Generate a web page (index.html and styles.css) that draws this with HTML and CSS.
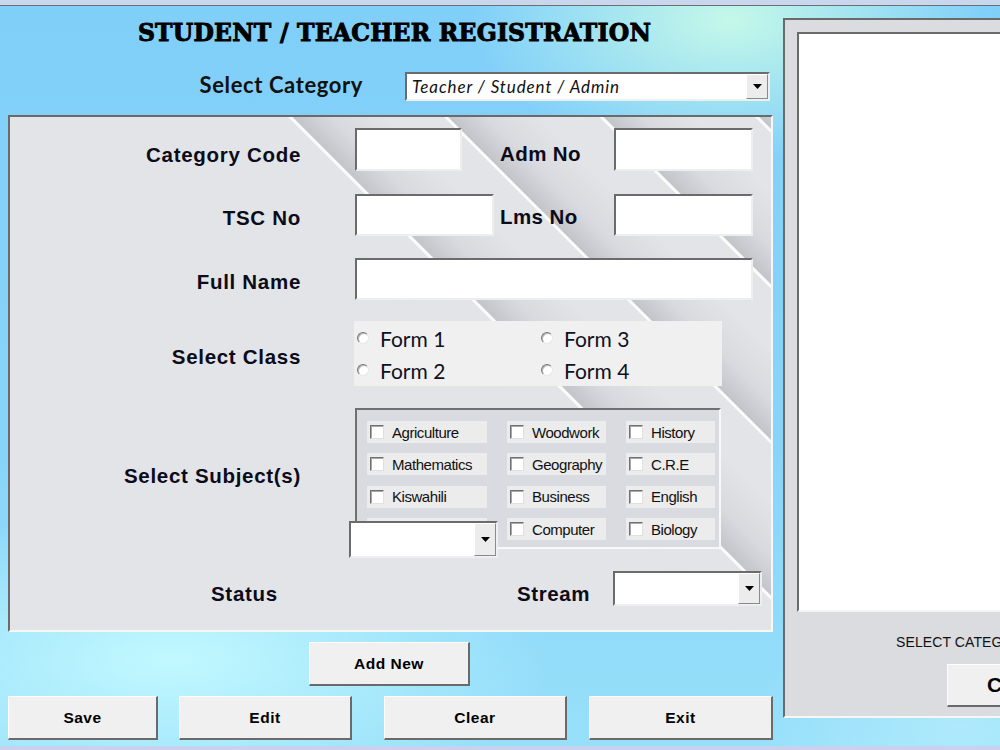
FILE: index.html
```html
<!DOCTYPE html>
<html>
<head>
<meta charset="utf-8">
<title>Student / Teacher Registration</title>
<link rel="stylesheet" href="styles.css">
</head>
<body>
<div class="screen">
  <div class="topbar"></div>
  <div class="main">
    <div class="left">
      <h1 class="title">STUDENT / TEACHER REGISTRATION</h1>
      <div class="cat-row">
        <span class="cat-label">Select Category</span>
        <div class="combo combo-cat">
          <span class="combo-text">Teacher / Student / Admin</span>
          <span class="combo-btn"><svg width="9" height="5" viewBox="0 0 9 5"><polygon points="0,0 9,0 4.5,5" fill="#000"/></svg></span>
        </div>
      </div>

      <div class="panel">
        <span class="lbl r1">Category Code</span>
        <div class="input w107 r1 c2"></div>
        <span class="lbl-mid r1">Adm No</span>
        <div class="input r1 c4"></div>

        <span class="lbl r2">TSC No</span>
        <div class="input r2 c2"></div>
        <span class="lbl-mid r2">Lms No</span>
        <div class="input r2 c4"></div>

        <span class="lbl r3">Full Name</span>
        <div class="input r3 span3"></div>

        <span class="lbl r4">Select Class</span>
        <div class="radios r4 span3">
          <label class="radio"><span class="dot"></span>Form 1</label>
          <label class="radio"><span class="dot"></span>Form 3</label>
          <label class="radio"><span class="dot"></span>Form 2</label>
          <label class="radio"><span class="dot"></span>Form 4</label>
        </div>

        <span class="lbl r5">Select Subject(s)</span>
        <div class="subjects r5 span3">
          <div class="subj"><span class="box"></span>Agriculture</div>
          <div class="subj"><span class="box"></span>Woodwork</div>
          <div class="subj"><span class="box"></span>History</div>
          <div class="subj"><span class="box"></span>Mathematics</div>
          <div class="subj"><span class="box"></span>Geography</div>
          <div class="subj"><span class="box"></span>C.R.E</div>
          <div class="subj"><span class="box"></span>Kiswahili</div>
          <div class="subj"><span class="box"></span>Business</div>
          <div class="subj"><span class="box"></span>English</div>
          <div class="subj"><span class="box"></span>Physics</div>
          <div class="subj"><span class="box"></span>Computer</div>
          <div class="subj"><span class="box"></span>Biology</div>
          <div class="combo combo-status">
            <span class="combo-text"></span>
            <span class="combo-btn"><svg width="9" height="5" viewBox="0 0 9 5"><polygon points="0,0 9,0 4.5,5" fill="#000"/></svg></span>
          </div>
        </div>

        <span class="lbl lbl-status r6">Status</span>
        <div class="stream-row r6 span3">
          <span class="stream-label">Stream</span>
          <div class="combo combo-stream">
            <span class="combo-text"></span>
            <span class="combo-btn"><svg width="9" height="5" viewBox="0 0 9 5"><polygon points="0,0 9,0 4.5,5" fill="#000"/></svg></span>
          </div>
        </div>
      </div>

      <div class="add-row"><button class="btn btn-add">Add New</button></div>
      <div class="btn-row">
        <button class="btn btn-save">Save</button>
        <button class="btn btn-edit">Edit</button>
        <button class="btn btn-clear">Clear</button>
        <button class="btn btn-exit">Exit</button>
      </div>
    </div>

    <div class="right">
      <div class="list"></div>
      <div class="right-caption">SELECT CATEGORY</div>
      <div class="right-btn-row"><button class="btn btn-side">Close</button></div>
    </div>
  </div>
  <div class="bottombar"></div>
</div>
</body>
</html>
```

FILE: styles.css
```css
* { box-sizing: border-box; }
html, body { margin: 0; padding: 0; }
body { font-family: "Liberation Sans", Arial, sans-serif; background: #8ad5f9; }

.screen {
  width: 1000px;
  height: 750px;
  overflow: hidden;
  position: relative;
  background:
    radial-gradient(ellipse 260px 140px at 730px 20px, rgba(200,250,232,0.95), rgba(200,250,232,0) 100%),
    radial-gradient(ellipse 380px 150px at 170px 660px, rgba(196,250,255,0.95), rgba(196,250,255,0) 100%),
    radial-gradient(ellipse 200px 160px at 960px 730px, rgba(180,236,252,0.8), rgba(180,236,252,0) 100%),
    linear-gradient(180deg, #80cff9 0%, #88d4f9 60%, #98e0fa 100%);
}

.topbar {
  height: 6px;
  background: #c8d6ee;
  border-bottom: 1px solid #6f6f6f;
}

.bottombar {
  height: 4px;
  background: #c6d2ee;
}

.main {
  display: flex;
  gap: 10px;
  padding-left: 8px;
  height: 740px;
}

.left {
  width: 765px;
  display: flex;
  flex-direction: column;
}

.title {
  margin: 10px 0 0 0;
  height: 34px;
  line-height: 34px;
  text-align: center;
  font-family: "DejaVu Serif", "Liberation Serif", serif;
  font-weight: bold;
  font-size: 23.5px;
  letter-spacing: 0.2px;
  -webkit-text-stroke: 0.9px #000;
  color: #000;
  padding-left: 8px;
}

.cat-row {
  margin-top: 22px;
  height: 29px;
  display: flex;
  align-items: center;
}

.cat-label {
  width: 355px;
  text-align: right;
  font-family: Lato, "Liberation Sans", sans-serif;
  font-weight: 700;
  font-size: 22px;
  letter-spacing: 0.6px;
  color: #111;
  margin-top: -4px;
}

/* combo boxes */
.combo {
  display: flex;
  background: #fff;
  border-style: solid;
  border-width: 2px;
  border-color: #6b6b6b #efefef #efefef #6b6b6b;
}
.combo-text {
  flex: 1;
  display: flex;
  align-items: center;
}
.combo-btn {
  width: 21px;
  background: #ececec;
  border-style: solid;
  border-width: 1px;
  border-color: #ffffff #8a8a8a #8a8a8a #ffffff;
  display: flex;
  align-items: center;
  justify-content: center;
}
.combo-cat {
  margin-left: 42px;
  width: 365px;
  height: 29px;
}
.combo-cat .combo-text {
  padding-left: 5px;
  font-family: Lato, "Liberation Sans", sans-serif;
  font-style: italic;
  font-size: 17px;
  color: #111;
  letter-spacing: 0.9px;
}
.combo-cat .combo-btn { width: 22px; }

/* main form panel */
.panel {
  margin-top: 14px;
  height: 517px;
  border-style: solid;
  border-width: 2px;
  border-color: #6a6a6a #f7f7f7 #f7f7f7 #6a6a6a;
  padding-top: 11px;
  background:
    linear-gradient(45deg, #e3e4e7 0, #e3e4e7 56%, rgba(227,228,231,0) 59%),
    repeating-linear-gradient(45deg, #e3e4e7 0px, #e3e4e7 9px, #fbfbfb 10px, #fbfbfb 12px, #c3c5cb 13px, #d8dadf 40px, #e3e4e7 78px, #e3e4e7 110px);
  display: grid;
  grid-template-columns: 345px 139px 120px 139px;
  grid-template-rows: 43px 42px 42px 65px 141px 35px;
  row-gap: 22px;
  align-items: center;
}
.panel > .r1 { grid-row: 1; }
.panel > .r2 { grid-row: 2; margin-top: 1px; }
.panel > .r3 { grid-row: 3; margin-top: 1px; }
.panel > .r4 { grid-row: 4; }
.panel > .r5 { grid-row: 5; }
.panel > .r6 { grid-row: 6; }
.c2 { grid-column: 2; }
.c4 { grid-column: 4; }
.span3 { grid-column: 2 / 5; }

.lbl {
  grid-column: 1;
  text-align: right;
  padding-right: 54px;
  font-family: "Liberation Sans", Arial, sans-serif;
  font-weight: bold;
  font-size: 20.5px;
  letter-spacing: 0.7px;
  color: #0b0b1a;
}
.panel > .lbl.r1 { margin-top: 10px; }
.panel > .lbl.r2 { margin-top: 7px; }
.panel > .lbl.r3 { margin-top: 7px; }
.panel > .lbl.r4 { margin-top: 6px; }
.panel > .lbl.r5 { margin-top: -6px; }
.lbl-status {
  padding-right: 0;
  text-align: left;
  padding-left: 201px;
}
.panel > .lbl.r6 { margin-top: 10px; }

.lbl-mid {
  grid-column: 3;
  padding-left: 6px;
  font-family: "Liberation Sans", Arial, sans-serif;
  font-weight: bold;
  font-size: 20.5px;
  letter-spacing: 0.4px;
  color: #0b0b1a;
}
.panel > .lbl-mid.r1 { margin-top: 8px; }
.panel > .lbl-mid.r2 { margin-top: 5px; }

.input {
  height: 100%;
  background: #fff;
  border-style: solid;
  border-width: 2px;
  border-color: #6b6b6b #eeeeee #eeeeee #6b6b6b;
}
.panel > .input.r1 { height: 43px; }
.panel > .input.r2, .panel > .input.r3 { height: 42px; }
.w107 { width: 107px; }
.panel > .input.span3 { width: 398px; }

/* radio group */
.radios {
  height: 65px;
  width: 368px;
  margin-left: -1px;
  background: #f0f0f0;
  display: grid;
  grid-template-columns: 184px 184px;
  grid-template-rows: 32px 32px;
  padding: 1px 0 0 2px;
}
.radio {
  display: flex;
  align-items: center;
  font-family: Lato, "Liberation Sans", sans-serif;
  font-size: 21px;
  color: #10101e;
}
.dot {
  width: 12px;
  height: 12px;
  border-radius: 50%;
  background: #fff;
  border: 1px solid;
  border-color: #7a7a7a #e6e6e6 #e6e6e6 #7a7a7a;
  box-shadow: inset 1px 1px 0 #b0b0b0;
  margin-left: 1px;
  margin-right: 11px;
  margin-top: 0;
}

/* subjects frame */
.subjects {
  position: relative;
  width: 366px;
  height: 141px;
  background: #d9dbe0;
  border-style: solid;
  border-width: 2px;
  border-color: #707070 #f8f8f8 #f8f8f8 #707070;
  display: grid;
  grid-template-columns: 120px 99px 89px;
  grid-auto-rows: 22px;
  column-gap: 20px;
  row-gap: 10.4px;
  padding: 11px 0 0 10px;
}
.subj {
  background: #ececec;
  display: flex;
  align-items: center;
  font-family: "Liberation Sans", Arial, sans-serif;
  font-size: 15px;
  letter-spacing: -0.45px;
  color: #111;
}
.box {
  width: 14px;
  height: 14px;
  background: #fff;
  border: 1px solid;
  border-color: #707070 #e0e0e0 #e0e0e0 #707070;
  box-shadow: inset 1px 1px 0 #a8a8a8;
  margin-left: 3px;
  margin-right: 8px;
}
.combo-status {
  position: absolute;
  left: -8px;
  top: 111px;
  width: 149px;
  height: 37px;
}
.combo-status .combo-btn { width: 22px; }

/* status / stream row */
.stream-row {
  display: flex;
  align-items: center;
  height: 35px;
}
.stream-label {
  flex-shrink: 0;
  margin-left: 162px;
  width: 96px;
  font-family: "Liberation Sans", Arial, sans-serif;
  font-weight: bold;
  font-size: 20.5px;
  letter-spacing: 0.6px;
  color: #0b0b1a;
  margin-top: 10px;
}
.combo-stream {
  flex-shrink: 0;
  width: 149px;
  height: 35px;
}
.combo-stream .combo-btn { width: 22px; }

/* buttons */
.btn {
  background: #f0f0f0;
  border-style: solid;
  border-width: 1px 2px 2px 1px;
  border-color: #fdfdfd #6a6a6a #6a6a6a #fdfdfd;
  font-family: "Liberation Sans", Arial, sans-serif;
  font-weight: bold;
  font-size: 15.5px;
  letter-spacing: 0.5px;
  color: #000;
  padding: 0;
  height: 44px;
}
.add-row {
  margin-top: 10px;
  height: 44px;
  display: flex;
}
.btn-add {
  margin-left: 301px;
  width: 161px;
}
.btn-row {
  margin-top: 10px;
  height: 44px;
  display: flex;
}
.btn-save { width: 150px; }
.btn-edit { width: 173px; margin-left: 21px; }
.btn-clear { width: 183px; margin-left: 32px; }
.btn-exit { width: 184px; margin-left: 22px; }

/* right panel */
.right {
  margin-top: 12px;
  width: 320px;
  flex-shrink: 0;
  height: 700px;
  background: #dadce0;
  border-style: solid;
  border-width: 2px;
  border-color: #6a6a6a #f7f7f7 #f7f7f7 #6a6a6a;
  padding: 12px 0 0 12px;
  display: flex;
  flex-direction: column;
}
.list {
  height: 580px;
  background: #fff;
  border-style: solid;
  border-width: 2px;
  border-color: #6a6a6a #f4f4f4 #f4f4f4 #6a6a6a;
}
.right-caption {
  margin-top: 22px;
  padding-left: 99px;
  font-family: "Liberation Sans", Arial, sans-serif;
  font-size: 14px;
  letter-spacing: 0.1px;
  color: #111;
  white-space: nowrap;
}
.right-btn-row {
  margin-top: 14px;
  display: flex;
}
.btn-side {
  margin-left: 150px;
  width: 150px;
  height: 43px;
  text-align: left;
  padding-left: 39px;
  font-size: 21px;
}
```
